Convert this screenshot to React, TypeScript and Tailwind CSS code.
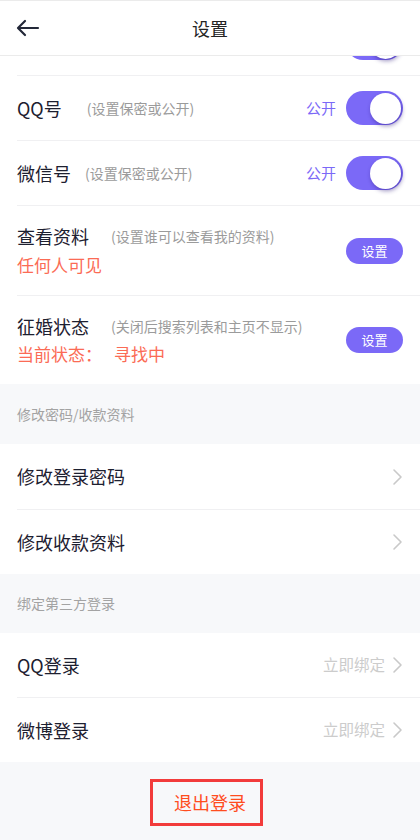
import { ReactNode } from 'react'

const font = { fontFamily: '"Noto Sans CJK SC", "Noto Sans", sans-serif' }

function Toggle() {
  return (
    <div className="w-[57px] h-[34px] rounded-full bg-[#7b69f7] flex items-center justify-end pr-[2px]">
      <div className="w-[31px] h-[31px] rounded-full bg-white shadow-[1px_2px_4px_rgba(40,20,120,0.45)]"></div>
    </div>
  )
}

function Chevron() {
  return (
    <svg width="12" height="18" viewBox="0 0 12 18" fill="none" className="ml-[6px]">
      <path d="M3 2 L10 9 L3 16" stroke="#c9c9c9" strokeWidth="1.6" strokeLinecap="round" strokeLinejoin="round" />
    </svg>
  )
}

function Row({ children, height = 'h-[65px]', divider = true }: { children: ReactNode; height?: string; divider?: boolean }) {
  return (
    <div className="pl-[17px] bg-white">
      <div className={`${height} ${divider ? 'border-b border-[#f0f0f2]' : ''} flex items-center pr-[17px]`}>
        {children}
      </div>
    </div>
  )
}

function SectionLabel({ text, height }: { text: string; height: string }) {
  return (
    <div className={`${height} bg-[#f7f8fa] flex items-center pl-[17px] text-[14px] text-[#a3a3a3]`}>
      {text}
    </div>
  )
}

function App() {
  return (
    <div className="w-[420px] h-[840px] flex flex-col bg-[#f7f8fa] overflow-hidden" style={font}>
      <header className="h-[56px] shrink-0 bg-white border-t border-b border-[#ebebeb] flex items-center">
        <div className="w-[60px] pl-[16px] flex items-center">
          <svg width="24" height="18" viewBox="0 0 24 18" fill="none">
            <path d="M22 9 H2.5 M9 2 L2 9 L9 16" stroke="#232838" strokeWidth="2.2" strokeLinecap="round" strokeLinejoin="round" />
          </svg>
        </div>
        <div className="flex-1 text-center text-[18px] text-[#232323] pr-[60px]">设置</div>
      </header>

      <div className="flex-1 overflow-hidden">
        <div className="-mt-[45px]">
          <Row>
            <div className="flex-1"></div>
            <Toggle />
          </Row>
          <Row>
            <span className="text-[18px] text-[#1d2030]">QQ号</span>
            <span className="ml-[25px] text-[14px] text-[#9b9b9b]">(设置保密或公开)</span>
            <div className="flex-1"></div>
            <span className="text-[15px] text-[#7b69f7] mr-[10px]">公开</span>
            <Toggle />
          </Row>
          <Row>
            <span className="text-[18px] text-[#1d2030]">微信号</span>
            <span className="ml-[14px] text-[14px] text-[#9b9b9b]">(设置保密或公开)</span>
            <div className="flex-1"></div>
            <span className="text-[15px] text-[#7b69f7] mr-[10px]">公开</span>
            <Toggle />
          </Row>
          <Row height="h-[90px]">
            <div className="flex-1 flex flex-col">
              <div className="h-[28px] flex items-center">
                <span className="text-[18px] text-[#1d2030]">查看资料</span>
                <span className="ml-[22px] text-[14px] text-[#9b9b9b]">(设置谁可以查看我的资料)</span>
              </div>
              <div className="h-[28px] flex items-center text-[17px] text-[#fb6b55]">任何人可见</div>
            </div>
            <button className="w-[57px] h-[26px] rounded-full bg-[#7b69f7] text-white text-[13px]">设置</button>
          </Row>
          <Row height="h-[88px]" divider={false}>
            <div className="flex-1 flex flex-col">
              <div className="h-[28px] flex items-center">
                <span className="text-[18px] text-[#1d2030]">征婚状态</span>
                <span className="ml-[22px] text-[14px] text-[#9b9b9b]">(关闭后搜索列表和主页不显示)</span>
              </div>
              <div className="h-[28px] flex items-center text-[17px] text-[#fb6b55]">
                <span>当前状态：</span>
                <span className="ml-[12px]">寻找中</span>
              </div>
            </div>
            <button className="w-[57px] h-[26px] rounded-full bg-[#7b69f7] text-white text-[13px]">设置</button>
          </Row>

          <SectionLabel text="修改密码/收款资料" height="h-[60px]" />
          <Row height="h-[66px]">
            <span className="flex-1 text-[18px] text-[#1d2030]">修改登录密码</span>
            <Chevron />
          </Row>
          <Row height="h-[64px]" divider={false}>
            <span className="flex-1 text-[18px] text-[#1d2030]">修改收款资料</span>
            <Chevron />
          </Row>

          <SectionLabel text="绑定第三方登录" height="h-[59px]" />
          <Row>
            <span className="flex-1 text-[18px] text-[#1d2030]">QQ登录</span>
            <span className="text-[15.5px] text-[#cccccc]">立即绑定</span>
            <Chevron />
          </Row>
          <Row height="h-[64px]" divider={false}>
            <span className="flex-1 text-[18px] text-[#1d2030]">微博登录</span>
            <span className="text-[15.5px] text-[#cccccc]">立即绑定</span>
            <Chevron />
          </Row>

          <div className="pt-[17px]">
            <button className="ml-[150px] w-[113px] h-[47px] border-[3px] border-[#f23b3b] flex items-center justify-center pl-[7px] text-[18px] text-[#ff4d1f]">
              退出登录
            </button>
          </div>
        </div>
      </div>
    </div>
  )
}

export default App
